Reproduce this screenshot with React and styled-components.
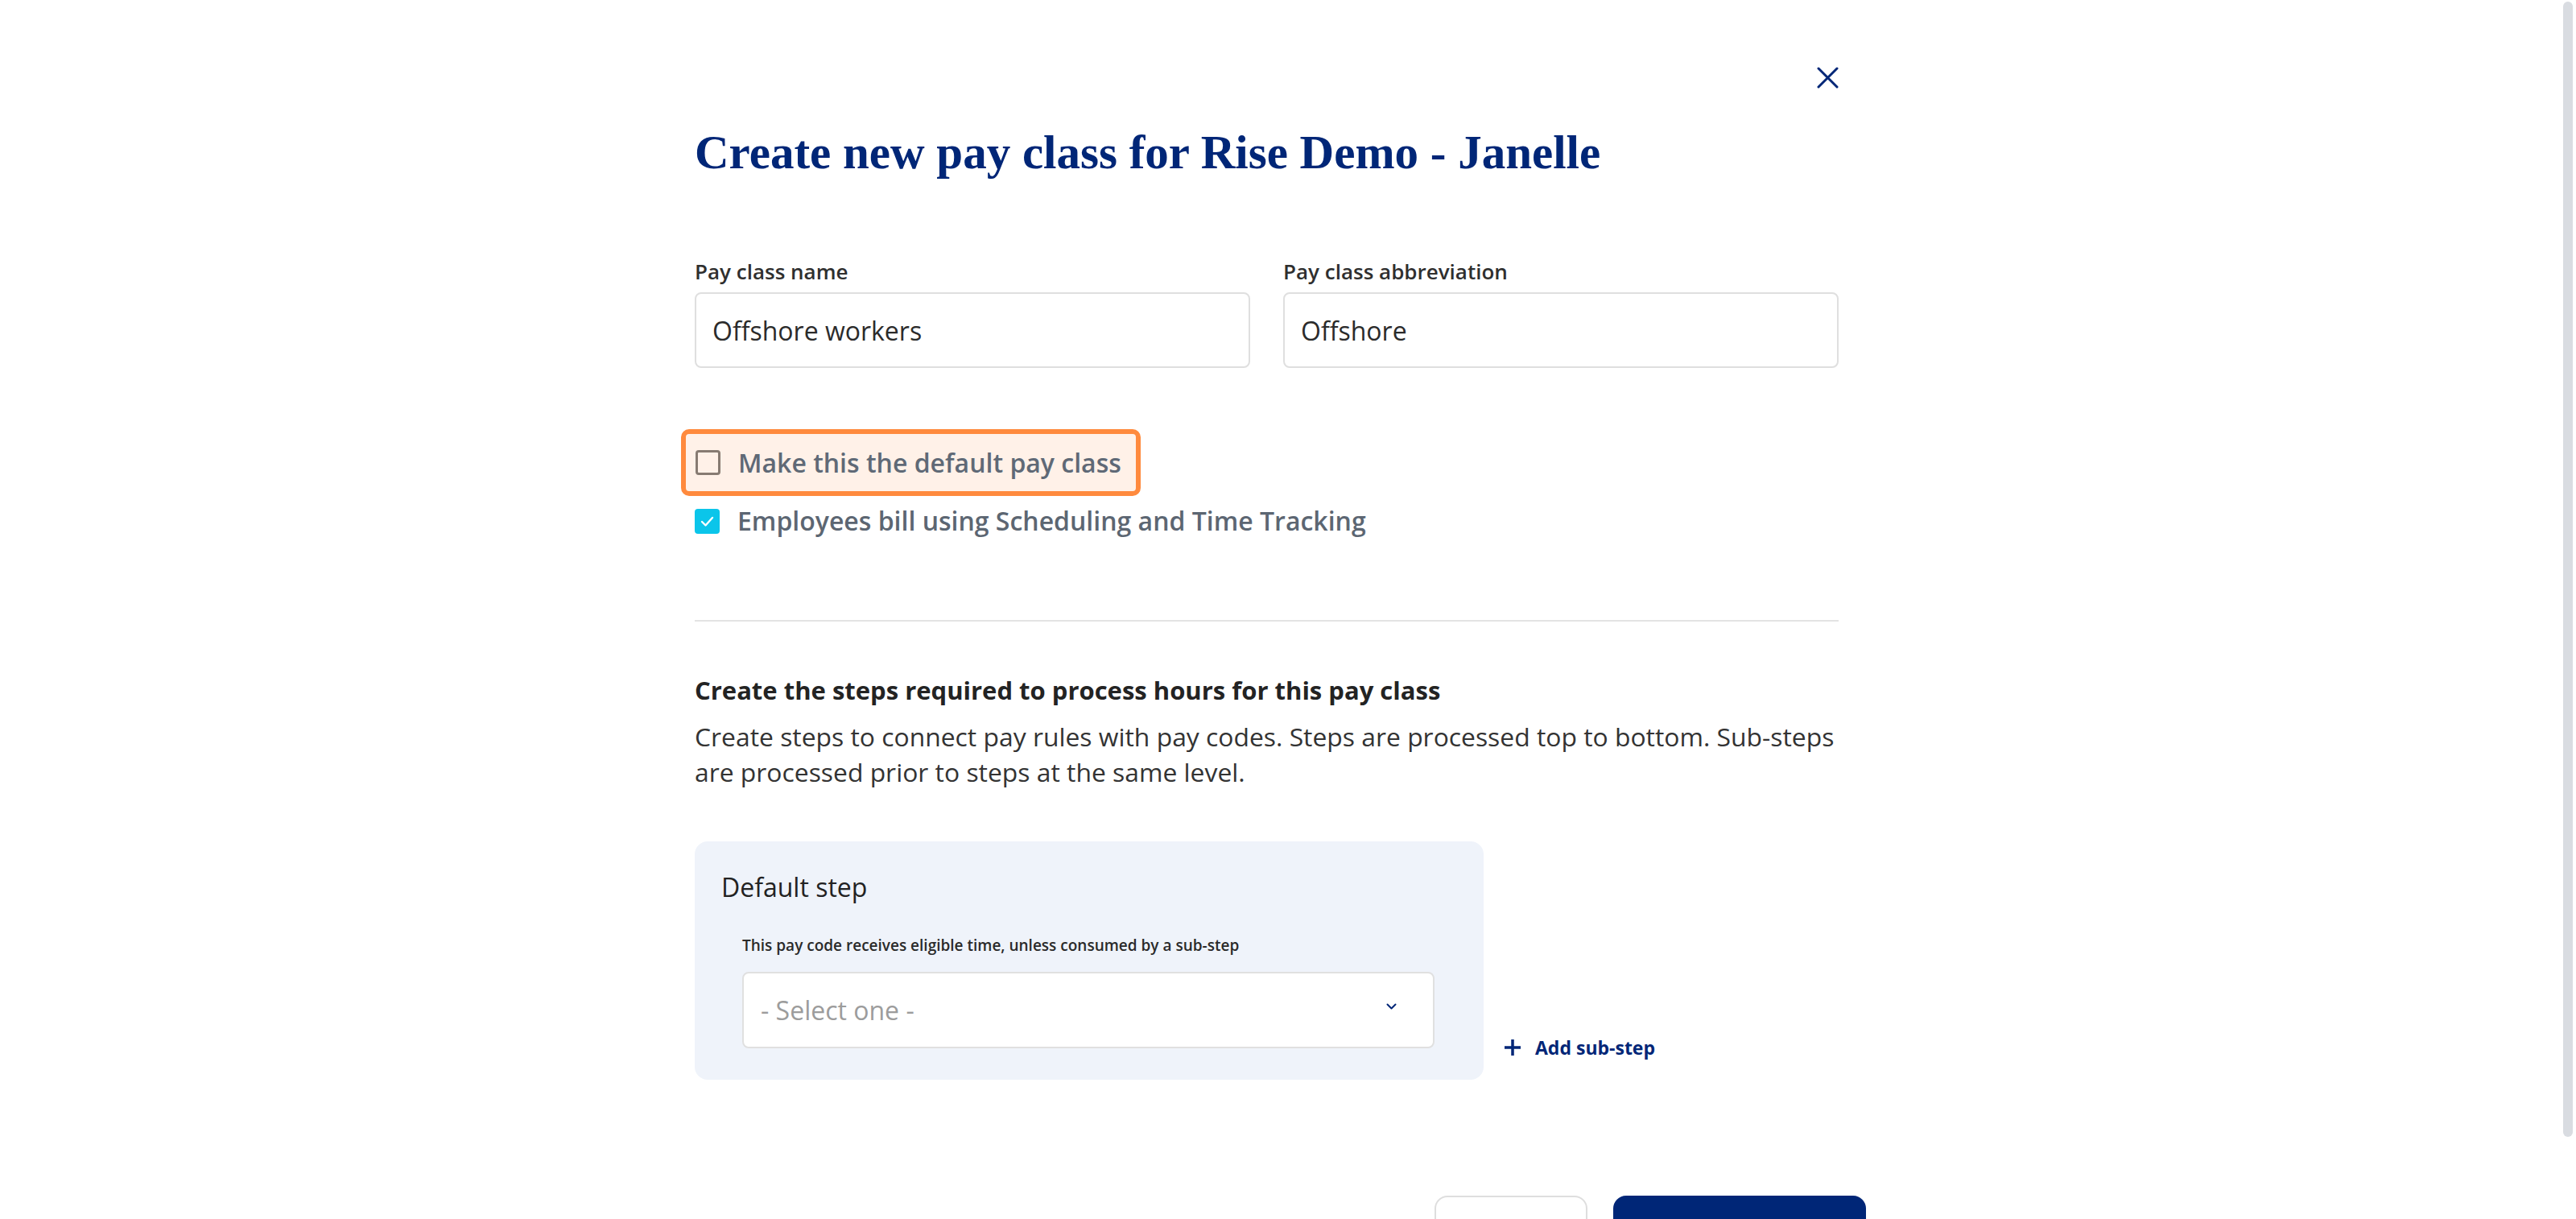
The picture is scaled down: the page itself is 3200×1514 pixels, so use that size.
import React from "react";
import styled, { createGlobalStyle } from "styled-components";

const GlobalStyle = createGlobalStyle`
  html, body {
    margin: 0;
    padding: 0;
    background: #ffffff;
  }
  body {
    font-family: "Open Sans", "Noto Sans", Arial, sans-serif;
    color: #2b2b2b;
  }
  * {
    box-sizing: border-box;
  }
`;

const navy = "#002677";

const Page = styled.div`
  display: flex;
  height: 1514px;
  overflow: hidden;
  background: #ffffff;
`;

const Main = styled.main`
  flex: 1;
  min-width: 0;
`;

const ScrollTrack = styled.div`
  width: 16px;
  padding: 2px 4px 0 0;
`;

const ScrollThumb = styled.div`
  width: 12px;
  height: 1410px;
  border-radius: 6px;
  background: #d9dce1;
`;

const Modal = styled.section`
  width: 1489px;
  margin-left: 829px;
  padding: 0 34px;
`;

const CloseRow = styled.div`
  display: flex;
  justify-content: flex-end;
  padding-top: 83px;
`;

const CloseButton = styled.button`
  width: 27px;
  height: 27px;
  padding: 0;
  border: none;
  background: none;
  cursor: pointer;
  display: flex;
`;

const Title = styled.h1`
  margin: 47px 0 0;
  font-family: "Liberation Serif", "DejaVu Serif", serif;
  font-weight: 700;
  font-size: 59px;
  line-height: 64px;
  color: ${navy};
`;

const FieldRow = styled.div`
  display: grid;
  grid-template-columns: 1fr 1fr;
  column-gap: 41px;
  margin-top: 100px;
`;

const Field = styled.label`
  display: flex;
  flex-direction: column;
`;

const FieldLabel = styled.span`
  font-size: 26px;
  font-weight: 600;
  line-height: 32px;
  color: #2f2f2f;
  margin-bottom: 10px;
`;

const TextInput = styled.input`
  height: 94px;
  width: 100%;
  padding: 0 20px;
  border: 2px solid #dfdfdf;
  border-radius: 8px;
  font-family: "Open Sans", sans-serif;
  font-size: 32px;
  color: #2b2b2b;
  outline: none;
`;

const Highlight = styled.div`
  display: inline-flex;
  align-items: center;
  gap: 22px;
  height: 83px;
  margin: 76px 0 0 -17px;
  padding: 0 18px 0 12px;
  border: 6px solid #ff8a3d;
  border-radius: 10px;
  background: #fff1e8;
`;

const CheckRow = styled.div`
  display: flex;
  align-items: center;
  gap: 22px;
  height: 40px;
  margin-top: 11px;
`;

const Box = styled.span`
  width: 31px;
  height: 31px;
  flex: none;
  display: flex;
  align-items: center;
  justify-content: center;
  border-radius: 4px;
  border: ${(p) => (p.$checked ? "none" : "3px solid #877b72")};
  background: ${(p) => (p.$checked ? "#0bc5ea" : "transparent")};
`;

const CheckLabel = styled.span`
  font-size: 32px;
  font-weight: 600;
  line-height: 40px;
  color: ${(p) => p.$color || "#5c6672"};
`;

const Divider = styled.hr`
  margin: 103px 0 0;
  border: none;
  height: 2px;
  background: #e3e3e3;
`;

const SectionHeading = styled.h2`
  margin: 64px 0 0;
  font-size: 31px;
  font-weight: 700;
  line-height: 42px;
  color: #232323;
`;

const SectionText = styled.p`
  margin: 15px 0 0;
  font-size: 31.85px;
  line-height: 44px;
  color: #333333;
`;

const StepRow = styled.div`
  display: flex;
  align-items: flex-end;
  gap: 25px;
  margin-top: 64px;
`;

const StepCard = styled.div`
  width: 980px;
  padding: 37px 61px 39px 33px;
  border-radius: 16px;
  background: #eff3fa;
`;

const StepTitle = styled.div`
  font-size: 32px;
  line-height: 40px;
  color: #222222;
`;

const StepBody = styled.div`
  margin: 40px 0 0 26px;
`;

const StepHint = styled.div`
  font-size: 19px;
  font-weight: 600;
  line-height: 24px;
  color: #2a2a2a;
`;

const Select = styled.div`
  display: flex;
  align-items: center;
  justify-content: space-between;
  height: 95px;
  margin-top: 21px;
  padding: 0 45px 0 21px;
  border: 2px solid #e0e0e0;
  border-radius: 8px;
  background: #ffffff;
  font-size: 32px;
  color: #9c9c9c;
`;

const Chevron = styled.svg`
  margin-bottom: 10px;
`;

const AddLink = styled.button`
  display: flex;
  align-items: center;
  gap: 17px;
  margin-bottom: 24px;
  padding: 0;
  border: none;
  background: none;
  font-family: "Open Sans", sans-serif;
  font-size: 23px;
  font-weight: 700;
  color: ${navy};
  cursor: pointer;
`;

const Footer = styled.div`
  display: flex;
  justify-content: flex-end;
  gap: 32px;
  margin: 144px -34px 0 0;
`;

const FooterButton = styled.button`
  height: 100px;
  width: ${(p) => (p.$primary ? "314px" : "190px")};
  border-radius: 16px;
  border: ${(p) => (p.$primary ? "none" : "2px solid #dedede")};
  background: ${(p) => (p.$primary ? navy : "#ffffff")};
  color: ${(p) => (p.$primary ? "#ffffff" : navy)};
  font-family: "Open Sans", sans-serif;
  font-size: 26px;
  font-weight: 700;
`;

export default function App() {
  return (
    <Page>
      <GlobalStyle />
      <Main>
        <Modal>
          <CloseRow>
            <CloseButton aria-label="Close">
              <svg width="27" height="27" viewBox="0 0 27 27">
                <path
                  d="M2 2 L25 25 M25 2 L2 25"
                  stroke={navy}
                  strokeWidth="3"
                  strokeLinecap="round"
                />
              </svg>
            </CloseButton>
          </CloseRow>
          <Title>Create new pay class for Rise Demo - Janelle</Title>

          <FieldRow>
            <Field>
              <FieldLabel>Pay class name</FieldLabel>
              <TextInput defaultValue="Offshore workers" />
            </Field>
            <Field>
              <FieldLabel>Pay class abbreviation</FieldLabel>
              <TextInput defaultValue="Offshore" />
            </Field>
          </FieldRow>

          <Highlight>
            <Box />
            <CheckLabel $color="#5f6976">Make this the default pay class</CheckLabel>
          </Highlight>
          <CheckRow>
            <Box $checked>
              <svg width="19" height="19" viewBox="0 0 19 19">
                <path
                  d="M3 10 L7.5 14.5 L16 5"
                  fill="none"
                  stroke="#ffffff"
                  strokeWidth="2.4"
                  strokeLinecap="round"
                  strokeLinejoin="round"
                />
              </svg>
            </Box>
            <CheckLabel>Employees bill using Scheduling and Time Tracking</CheckLabel>
          </CheckRow>

          <Divider />

          <SectionHeading>
            Create the steps required to process hours for this pay class
          </SectionHeading>
          <SectionText>
            Create steps to connect pay rules with pay codes. Steps are processed top to
            bottom. Sub-steps are processed prior to steps at the same level.
          </SectionText>

          <StepRow>
            <StepCard>
              <StepTitle>Default step</StepTitle>
              <StepBody>
                <StepHint>
                  This pay code receives eligible time, unless consumed by a sub-step
                </StepHint>
                <Select>
                  <span>- Select one -</span>
                  <Chevron width="13" height="8" viewBox="0 0 13 8">
                    <path
                      d="M1.5 1.5 L6.5 6.5 L11.5 1.5"
                      fill="none"
                      stroke={navy}
                      strokeWidth="2"
                      strokeLinecap="round"
                      strokeLinejoin="round"
                    />
                  </Chevron>
                </Select>
              </StepBody>
            </StepCard>
            <AddLink>
              <svg width="22" height="22" viewBox="0 0 22 22">
                <path
                  d="M11 1 V21 M1 11 H21"
                  stroke={navy}
                  strokeWidth="3.5"
                />
              </svg>
              Add sub-step
            </AddLink>
          </StepRow>

          <Footer>
            <FooterButton>Cancel</FooterButton>
            <FooterButton $primary>Create pay class</FooterButton>
          </Footer>
        </Modal>
      </Main>
      <ScrollTrack>
        <ScrollThumb />
      </ScrollTrack>
    </Page>
  );
}
